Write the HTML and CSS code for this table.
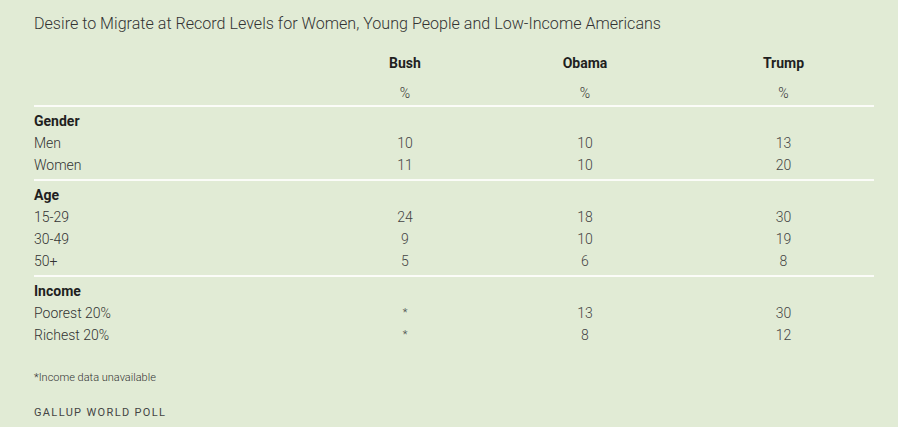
FILE: index.html
```html
<!DOCTYPE html>
<html lang="en">
<head>
<meta charset="utf-8">
<title>Desire to Migrate</title>
<link rel="stylesheet" href="styles.css">
</head>
<body>
<div class="chart">
  <h1 class="title">Desire to Migrate at Record Levels for Women, Young People and Low-Income Americans</h1>
  <div class="table">
    <div class="head">
      <div class="row head-names">
        <div class="label"></div>
        <div class="val">Bush</div>
        <div class="val">Obama</div>
        <div class="val last">Trump</div>
      </div>
      <div class="row head-units">
        <div class="label"></div>
        <div class="val">%</div>
        <div class="val">%</div>
        <div class="val last">%</div>
      </div>
    </div>
    <div class="section">
      <div class="row"><div class="label group">Gender</div></div>
      <div class="row"><div class="label">Men</div><div class="val">10</div><div class="val">10</div><div class="val last">13</div></div>
      <div class="row"><div class="label">Women</div><div class="val">11</div><div class="val">10</div><div class="val last">20</div></div>
    </div>
    <div class="section">
      <div class="row"><div class="label group">Age</div></div>
      <div class="row"><div class="label">15-29</div><div class="val">24</div><div class="val">18</div><div class="val last">30</div></div>
      <div class="row"><div class="label">30-49</div><div class="val">9</div><div class="val">10</div><div class="val last">19</div></div>
      <div class="row"><div class="label">50+</div><div class="val">5</div><div class="val">6</div><div class="val last">8</div></div>
    </div>
    <div class="section">
      <div class="row"><div class="label group">Income</div></div>
      <div class="row"><div class="label">Poorest 20%</div><div class="val star">*</div><div class="val">13</div><div class="val last">30</div></div>
      <div class="row"><div class="label">Richest 20%</div><div class="val star">*</div><div class="val">8</div><div class="val last">12</div></div>
    </div>
  </div>
  <p class="note">*Income data unavailable</p>
  <p class="source">GALLUP WORLD POLL</p>
</div>
</body>
</html>
```
FILE: styles.css
```css
html, body {
  margin: 0;
  padding: 0;
  background: #e1ebd5;
}
body {
  font-family: Roboto, "Liberation Sans", sans-serif;
  font-weight: 300;
  color: #333;
}
.chart {
  width: 840px;
  padding: 12px 0 0 34px;
}
.title {
  margin: 0;
  font-size: 16.1px;
  font-weight: 300;
  line-height: 24px;
  color: #333;
}
.table {
  margin-top: 17px;
  font-size: 14px;
}
.row {
  display: grid;
  grid-template-columns: 281px 180px 180px 1fr;
  line-height: 22px;
  height: 22px;
}
.label {
  color: #333;
}
.group {
  font-weight: 700;
  color: #1f1f1f;
}
.val {
  text-align: center;
  color: #444;
}
.val.last {
  padding-left: 18px;
}
.head-names {
  height: 29px;
  line-height: 20px;
}
.head-names .val {
  font-weight: 700;
  color: #1f1f1f;
}
.head-units {
  padding-bottom: 1px;
}
.head-units .val {
  font-size: 14px;
  color: #333;
}
.section {
  border-top: 2px solid #fbfcf8;
  padding: 3px 0;
}
.star {
  font-size: 11px;
}
.note {
  margin: 21px 0 0;
  font-size: 11px;
  line-height: 16px;
  color: #333;
}
.source {
  margin: 19px 0 0;
  font-size: 11px;
  font-weight: 400;
  line-height: 16px;
  letter-spacing: 1.35px;
  color: #444;
}
```
